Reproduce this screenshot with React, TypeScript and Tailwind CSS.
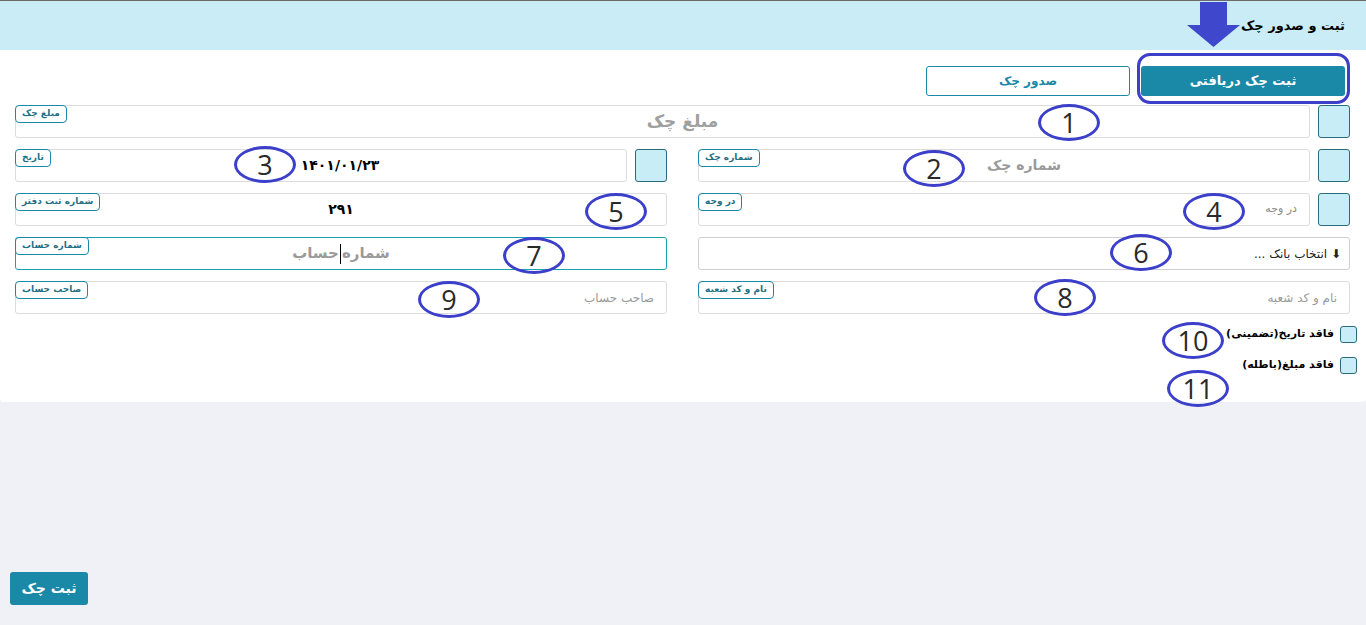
import React from 'react';

const FONT = { fontFamily: '"DejaVu Sans", "Noto Sans", sans-serif' };

// annotation ellipses drawn over the form
const marks: Array<{ n: string; cls: string }> = [
  { n: '1', cls: 'left-[1038px] top-[104px]' },
  { n: '2', cls: 'left-[903px] top-[150px]' },
  { n: '3', cls: 'left-[234px] top-[146px]' },
  { n: '4', cls: 'left-[1183px] top-[193px]' },
  { n: '5', cls: 'left-[585px] top-[193px]' },
  { n: '6', cls: 'left-[1110px] top-[234px]' },
  { n: '7', cls: 'left-[503px] top-[237px]' },
  { n: '8', cls: 'left-[1034px] top-[279px]' },
  { n: '9', cls: 'left-[418px] top-[281px]' },
  { n: '10', cls: 'left-[1162px] top-[322px]' },
  { n: '11', cls: 'left-[1167px] top-[370px]' },
];

function Chip({ children }: { children: React.ReactNode }) {
  return (
    <span className="absolute -left-px -top-px h-[18px] px-[6px] flex items-center rounded-[4px] border border-[#1a89a7] bg-white text-[9px] font-bold text-[#1f6f85] whitespace-nowrap">
      {children}
    </span>
  );
}

function Square() {
  return <div className="w-[32px] h-[33px] shrink-0 rounded-[3px] border border-[#2b6c7c] bg-[#c9edf6]" />;
}

function Field({
  label,
  children,
  align = 'center',
  focused = false,
}: {
  label?: string;
  children?: React.ReactNode;
  align?: 'center' | 'right';
  focused?: boolean;
}) {
  return (
    <div
      className={`relative flex-1 h-[33px] rounded-[3px] border bg-white flex items-center ${
        focused ? 'border-[#1aa0b0]' : 'border-[#dcdcdc]'
      } ${align === 'center' ? 'justify-center' : 'justify-start pr-[12px]'}`}
    >
      {label && <Chip>{label}</Chip>}
      {children}
    </div>
  );
}

export default function App() {
  return (
    <div dir="rtl" style={FONT} className="relative h-screen min-h-[625px] bg-[#f0f1f7] flex flex-col overflow-hidden">
      {/* header */}
      <div className="h-[50px] shrink-0 border-t border-[#6b6b6b] bg-[#c9ecf6] flex items-center pr-[21px]">
        <span className="text-[13px] font-bold text-black">ثبت و صدور چک</span>
      </div>

      {/* card */}
      <div className="bg-white rounded-b-[4px] pt-[16px] pb-[28px] pl-[15px] pr-[16px] flex flex-col">
        <div className="flex gap-[11px] pr-[5px]">
          <button className="w-[204px] h-[30px] rounded-[3px] bg-[#1a89a7] text-white text-[13px] font-bold">ثبت چک دریافتی</button>
          <button className="w-[204px] h-[30px] rounded-[3px] border border-[#1a89a7] bg-white text-[#1a89a7] text-[12px] font-bold">صدور چک</button>
        </div>

        <div className="mt-[9px] flex flex-col gap-[11px]">
          <div className="flex gap-[8px]">
            <Square />
            <Field label="مبلغ چک">
              <span className="text-[17px] font-bold text-[#a0a0a0] ml-[40px]">مبلغ چک</span>
            </Field>
          </div>

          <div className="grid grid-cols-2 gap-[31px]">
            <div className="flex gap-[8px]">
              <Square />
              <Field label="شماره چک">
                <span className="text-[14px] font-bold text-[#9a9a9a] ml-[40px]">شماره چک</span>
              </Field>
            </div>
            <div className="flex gap-[8px]">
              <Square />
              <Field label="تاریخ">
                <span className="text-[14px] font-bold text-black ml-[38px]">۱۴۰۱/۰۱/۲۳</span>
              </Field>
            </div>
          </div>

          <div className="grid grid-cols-2 gap-[31px]">
            <div className="flex gap-[8px]">
              <Square />
              <Field label="در وجه" align="right">
                <span className="text-[11px] text-[#8a8a8a]">در وجه</span>
              </Field>
            </div>
            <Field label="شماره ثبت دفتر">
              <span className="text-[14px] font-bold text-black">۲۹۱</span>
            </Field>
          </div>

          <div className="grid grid-cols-2 gap-[31px]">
            <div className="relative h-[33px] rounded-[3px] border border-[#cfcfcf] bg-white flex items-center pr-[8px]">
              <span className="text-[12px] text-[#222]">⬇ انتخاب بانک ...</span>
            </div>
            <Field label="شماره حساب" focused>
              <span className="text-[15px] font-bold text-[#9a9a9a] flex items-center">
                شماره
                <span className="inline-block w-px h-[20px] bg-black mx-[1px]" />
                حساب
              </span>
            </Field>
          </div>

          <div className="grid grid-cols-2 gap-[31px]">
            <Field label="نام و کد شعبه" align="right">
              <span className="text-[12px] text-[#9a9a9a]">نام و کد شعبه</span>
            </Field>
            <Field label="صاحب حساب" align="right">
              <span className="text-[12px] text-[#9a9a9a]">صاحب حساب</span>
            </Field>
          </div>
        </div>

        <div className="mt-[12px] flex flex-col gap-[14px] mr-[-7px]">
          <label className="flex items-center gap-[6px]">
            <span className="w-[17px] h-[17px] rounded-[3px] border border-[#2b6c7c] bg-[#c9edf6]" />
            <span className="text-[11px] font-bold text-black">فاقد تاریخ(تضمینی)</span>
          </label>
          <label className="flex items-center gap-[6px]">
            <span className="w-[17px] h-[17px] rounded-[3px] border border-[#2b6c7c] bg-[#c9edf6]" />
            <span className="text-[11px] font-bold text-black">فاقد مبلغ(باطله)</span>
          </label>
        </div>
      </div>

      <div className="mt-auto mb-[20px] flex justify-end pl-[10px]">
        <button className="w-[78px] h-[33px] rounded-[3px] bg-[#1a89a7] text-white text-[14px] font-bold">ثبت چک</button>
      </div>

      {/* annotations */}
      <svg className="absolute left-[1186px] top-[2px]" width="56" height="46" viewBox="0 0 56 46">
        <rect x="14" y="0" width="27" height="24" fill="#3f47cc" />
        <polygon points="1,23 54,23 27.5,45" fill="#3f47cc" />
      </svg>
      <div className="absolute left-[1137px] top-[53px] w-[213px] h-[51px] rounded-[13px] border-[3px] border-[#3c3fc9]" />
      {marks.map((m) => (
        <div
          key={m.n}
          dir="ltr"
          className={`absolute ${m.cls} w-[62px] h-[37px] rounded-[50%] border-[3px] border-[#3c3fc9] flex items-center justify-center text-[27px] leading-none text-[#2a2a2a]`}
          style={{ fontFamily: '"Open Sans", "Liberation Sans", sans-serif' }}
        >
          {m.n}
        </div>
      ))}
    </div>
  );
}
